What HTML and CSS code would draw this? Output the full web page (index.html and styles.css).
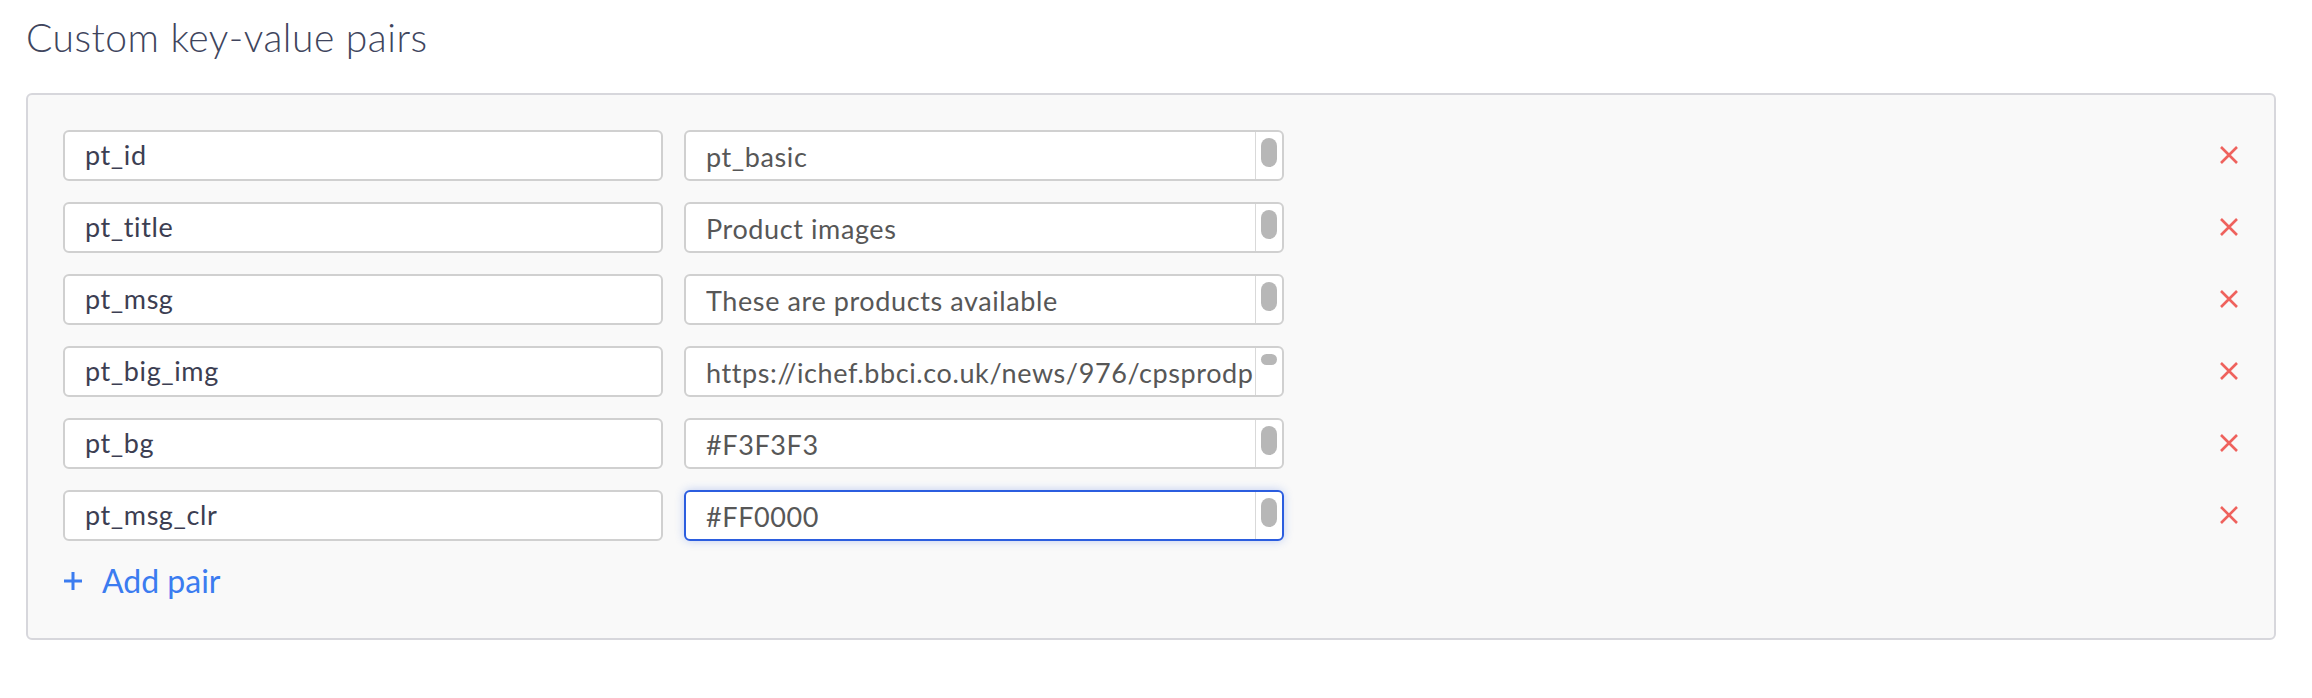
FILE: index.html
```html
<!DOCTYPE html>
<html>
<head>
<meta charset="utf-8">
<link rel="stylesheet" href="styles.css">
</head>
<body>
<div class="page">
  <h1 class="title">Custom key-value pairs</h1>
  <div class="panel">
    <div class="rows">
      <div class="row">
        <div class="field key">pt_id</div>
        <div class="field value"><span class="val-text">pt_basic</span><span class="track"><span class="thumb"></span></span></div>
        <button class="remove" aria-label="Remove"><svg viewBox="0 0 18 18" width="18" height="18"><path d="M1 1L17 17M17 1L1 17"/></svg></button>
      </div>
      <div class="row">
        <div class="field key">pt_title</div>
        <div class="field value"><span class="val-text">Product images</span><span class="track"><span class="thumb"></span></span></div>
        <button class="remove" aria-label="Remove"><svg viewBox="0 0 18 18" width="18" height="18"><path d="M1 1L17 17M17 1L1 17"/></svg></button>
      </div>
      <div class="row">
        <div class="field key">pt_msg</div>
        <div class="field value"><span class="val-text">These are products available</span><span class="track"><span class="thumb"></span></span></div>
        <button class="remove" aria-label="Remove"><svg viewBox="0 0 18 18" width="18" height="18"><path d="M1 1L17 17M17 1L1 17"/></svg></button>
      </div>
      <div class="row">
        <div class="field key">pt_big_img</div>
        <div class="field value"><span class="val-text">https://ichef.bbci.co.uk/news/976/cpsprodp</span><span class="track"><span class="thumb small"></span></span></div>
        <button class="remove" aria-label="Remove"><svg viewBox="0 0 18 18" width="18" height="18"><path d="M1 1L17 17M17 1L1 17"/></svg></button>
      </div>
      <div class="row">
        <div class="field key">pt_bg</div>
        <div class="field value"><span class="val-text">#F3F3F3</span><span class="track"><span class="thumb"></span></span></div>
        <button class="remove" aria-label="Remove"><svg viewBox="0 0 18 18" width="18" height="18"><path d="M1 1L17 17M17 1L1 17"/></svg></button>
      </div>
      <div class="row">
        <div class="field key">pt_msg_clr</div>
        <div class="field value focused"><span class="val-text">#FF0000</span><span class="track"><span class="thumb"></span></span></div>
        <button class="remove" aria-label="Remove"><svg viewBox="0 0 18 18" width="18" height="18"><path d="M1 1L17 17M17 1L1 17"/></svg></button>
      </div>
    </div>
    <button class="add">
      <svg class="plus" viewBox="0 0 20 20" width="20" height="20"><path d="M10 1V19M1 10H19"/></svg>
      <span>Add pair</span>
    </button>
  </div>
</div>
</body>
</html>
```
FILE: styles.css
```css
* { box-sizing: border-box; }
html, body { margin: 0; padding: 0; background: #ffffff; }
body { font-family: "Lato", "Open Sans", sans-serif; }

.page {
  padding: 14px 0 0 26px;
  width: 2276px;
}

.title {
  margin: 0 0 32px 0;
  font-family: "Lato", sans-serif;
  font-weight: 300;
  font-size: 39px;
  line-height: 1.2;
  color: #40455d;
  letter-spacing: 0.5px;
}

.panel {
  background: #f9f9f9;
  border: 2px solid #d7d7dc;
  border-radius: 6px;
  padding: 35px 36px 34px 35px;
}

.rows {
  display: flex;
  flex-direction: column;
  gap: 21px;
}

.row {
  display: flex;
  align-items: center;
  gap: 21px;
}

.field {
  width: 600px;
  height: 51px;
  background: #ffffff;
  border: 2px solid #d0d0d0;
  border-radius: 6px;
  font-size: 27px;
  letter-spacing: 0.6px;
  display: flex;
  align-items: center;
  overflow: hidden;
}

.key {
  padding: 0 20px 2px 20px;
  color: #3c3e52;
}

.value {
  color: #575757;
  padding-left: 20px;
  align-items: stretch;
}

.val-text {
  flex: 1;
  white-space: nowrap;
  overflow: hidden;
  display: flex;
  align-items: center;
  padding-top: 3px;
  padding-right: 4px;
}

.track {
  width: 27px;
  flex: none;
  border-left: 1px solid #d9d9d9;
  display: flex;
  justify-content: center;
  padding-top: 6px;
}

.thumb {
  display: block;
  width: 16px;
  height: 29px;
  border-radius: 8px;
  background: #b7b7b7;
}

.thumb.small {
  height: 11px;
  border-radius: 6px;
}

.focused {
  border-color: #2b5ddf;
  box-shadow: 0 0 10px rgba(43, 93, 223, 0.28);
}

.remove {
  margin-left: auto;
  border: 0;
  background: none;
  padding: 0;
  width: 18px;
  height: 18px;
  display: flex;
}

.remove svg path {
  stroke: #ef625d;
  stroke-width: 2.6;
  fill: none;
}

.add {
  margin-top: 20px;
  margin-bottom: 3px;
  border: 0;
  background: none;
  padding: 0;
  display: flex;
  align-items: center;
  gap: 19px;
  height: 40px;
  font-family: "Lato", sans-serif;
  font-size: 32px;
  color: #3b7cf0;
  cursor: pointer;
}

.plus path {
  stroke: #3b7cf0;
  stroke-width: 3;
  fill: none;
}
```
